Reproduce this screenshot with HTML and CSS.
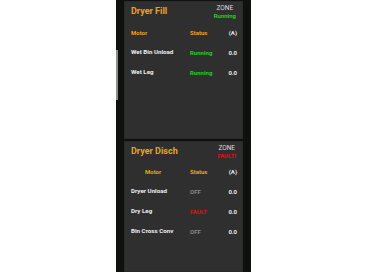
FILE: index.html
```html
<!DOCTYPE html>
<html lang="en">

<head>
  <meta charset="UTF-8">
  <meta name="viewport" content="width=device-width, initial-scale=1.0">
  <title>Dryer Zones</title>
  <link rel="stylesheet" href="styles.css">
</head>

<body>
  <div class="phone">
    <div class="scroll_mark"></div>

    <!-- zone 1 -->
    <div class="zone_panel first">
      <div class="zone_head">
        <div class="zone_title">Dryer Fill</div>
        <div class="zone_state">
          <div class="zone_label">ZONE</div>
          <div class="running">Running</div>
        </div>
      </div>
      <div class="motor_table">
        <div class="col_head">Motor</div>
        <div class="col_head">Status</div>
        <div class="col_head amps">(A)</div>

        <div class="motor_name">Wet Bin Unload</div>
        <div class="running">Running</div>
        <div class="amps">0.0</div>

        <div class="motor_name">Wet Leg</div>
        <div class="running">Running</div>
        <div class="amps">0.0</div>
      </div>
    </div>

    <!-- zone 2 -->
    <div class="zone_panel second">
      <div class="zone_head">
        <div class="zone_title">Dryer Disch</div>
        <div class="zone_state">
          <div class="zone_label">ZONE</div>
          <div class="fault">FAULT!</div>
        </div>
      </div>
      <div class="motor_table">
        <div class="col_head centered">Motor</div>
        <div class="col_head">Status</div>
        <div class="col_head amps">(A)</div>

        <div class="motor_name">Dryer Unload</div>
        <div class="off">OFF</div>
        <div class="amps">0.0</div>

        <div class="motor_name">Dry Leg</div>
        <div class="fault">FAULT</div>
        <div class="amps">0.0</div>

        <div class="motor_name">Bin Cross Conv</div>
        <div class="off">OFF</div>
        <div class="amps">0.0</div>
      </div>
    </div>
  </div>
</body>

</html>
```

FILE: styles.css
```css
body {
  margin: 0;
  padding-left: 116px;
  font-family: Roboto, "Liberation Sans", sans-serif;
  background-color: #fff;
}

.phone {
  position: relative;
  width: 119px;
  height: 271px;
  padding: 1px 8px 0 8px;
  background-color: #0f110f;
  display: flex;
  flex-direction: column;
  gap: 2px;
}

/* 左端の白いスクロール表示 */
.scroll_mark {
  position: absolute;
  left: 0;
  top: 50px;
  width: 2px;
  height: 50px;
  background-color: #8c8e8c;
}

.zone_panel {
  background-color: #333;
  background-image: radial-gradient(rgba(0, 0, 0, 0.18) 0.6px, transparent 0.8px);
  background-size: 2px 2px;
  box-shadow: inset 0 0 0 1px #2a2a2a;
  padding: 0 5px 0 7px;
}

.zone_panel.first {
  height: 138px;
}

.zone_panel.second {
  flex: 1;
}

.zone_head {
  display: flex;
  justify-content: space-between;
  align-items: flex-start;
}

.first .zone_head {
  height: 21px;
}

.second .zone_head {
  height: 20px;
}

.zone_title {
  color: #f0a313;
  font-size: 9px;
  font-weight: bold;
  margin-top: 5px;
}

.zone_state {
  margin-top: 3px;
  margin-right: 2px;
  text-align: center;
  font-size: 6px;
  line-height: 8px;
}

.zone_label {
  color: #ddd;
  font-size: 6.5px;
}

.motor_table {
  display: grid;
  grid-template-columns: 59px 1fr auto;
  grid-auto-rows: 20px;
  align-items: center;
  font-size: 6px;
  font-weight: bold;
}

.col_head {
  color: #f0a313;
}

.col_head.centered {
  padding-left: 14px;
}

.motor_name {
  color: #eee;
  font-size: 6.2px;
}

.amps {
  color: #e8e8e8;
  text-align: right;
  padding-right: 1px;
}

.running {
  color: #1fd11f;
  font-weight: bold;
}

.fault {
  color: #e01010;
  font-weight: bold;
}

.off {
  color: #8a8a8a;
}
```
